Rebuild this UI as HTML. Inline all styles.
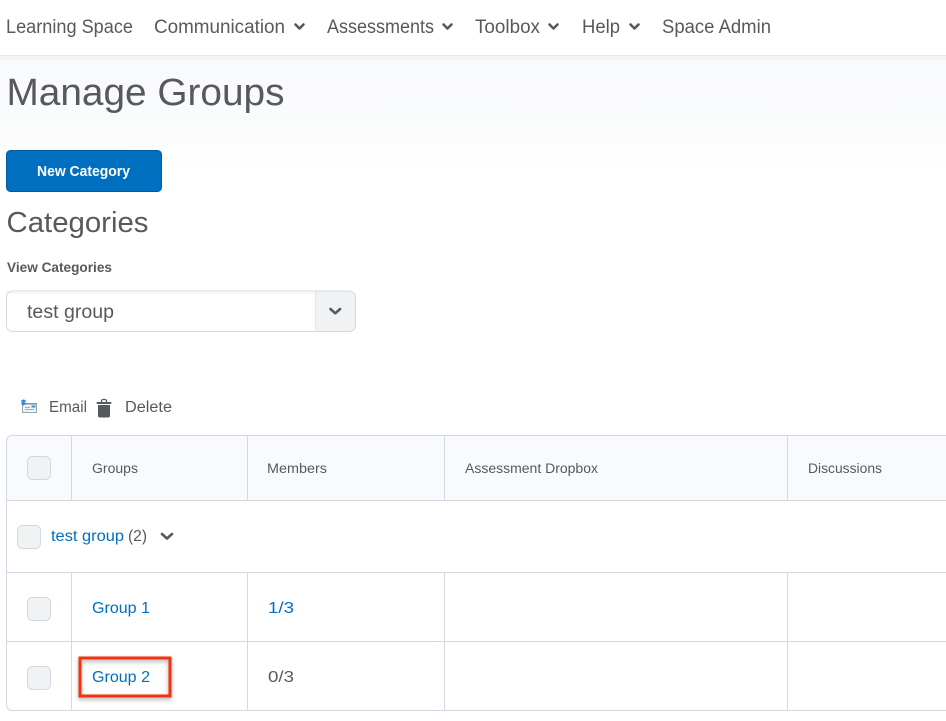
<!DOCTYPE html>
<html lang="en"><head><meta charset="utf-8"><title>Manage Groups</title>
<style>
html,body{margin:0;padding:0;background:#fff;width:946px;height:721px;overflow:hidden}
svg{display:block}
text{font-family:"Liberation Sans",sans-serif;fill:#565a5c}
</style></head><body>
<svg width="946" height="721" viewBox="0 0 946 721" xmlns="http://www.w3.org/2000/svg">
<defs>
<linearGradient id="g" x1="0" y1="0" x2="0" y2="1"><stop offset="0" stop-color="#f9fafb"/><stop offset=".5" stop-color="#fafbfc"/><stop offset="1" stop-color="#fff"/></linearGradient>
<filter id="s" x="-20%" y="-30%" width="140%" height="160%"><feDropShadow dx="0" dy="2" stdDeviation="2" flood-color="#000" flood-opacity=".35"/></filter>
<clipPath id="tc"><path d="M12 435H946V711H12a6 6 0 0 1-6-6V441a6 6 0 0 1 6-6Z"/></clipPath>
</defs>
<rect x="0" y="55" width="946" height="1" fill="#e6e8ec"/>
<rect x="0" y="56" width="946" height="4" fill="#f3f4f6"/>
<rect x="0" y="60" width="946" height="112" fill="url(#g)"/>

<g font-size="19">
<text x="6" y="33" textLength="127" lengthAdjust="spacingAndGlyphs">Learning Space</text>
<text x="154" y="33" textLength="131" lengthAdjust="spacingAndGlyphs">Communication</text>
<text x="327" y="33" textLength="107" lengthAdjust="spacingAndGlyphs">Assessments</text>
<text x="475" y="33" textLength="65" lengthAdjust="spacingAndGlyphs">Toolbox</text>
<text x="582" y="33" textLength="38" lengthAdjust="spacingAndGlyphs">Help</text>
<text x="662" y="33" textLength="109" lengthAdjust="spacingAndGlyphs">Space Admin</text>
</g>

<text x="6.500" y="105" font-size="38" textLength="278" lengthAdjust="spacingAndGlyphs">Manage Groups</text>

<rect x="6.500" y="150.500" width="155" height="41" rx="4" fill="#006fbf" stroke="#005d9f"/>
<text x="37" y="176" font-size="14.500" font-weight="bold" style="fill:#fff" textLength="93" lengthAdjust="spacingAndGlyphs">New Category</text>

<text x="6.500" y="232" font-size="29" textLength="142" lengthAdjust="spacingAndGlyphs">Categories</text>
<text x="7" y="272" font-size="14" font-weight="bold" textLength="105" lengthAdjust="spacingAndGlyphs">View Categories</text>

<rect x="6.500" y="291" width="349" height="40.500" rx="6" fill="#fff"/>
<path d="M315.500 291.500H350a5.500 5.500 0 0 1 5.500 5.500V326a5.500 5.500 0 0 1-5.500 5.500H315.500Z" fill="#f1f2f4"/>
<rect x="7" y="292" width="308" height="2" fill="#f5f6f8"/>
<rect x="6.500" y="291" width="349" height="40.500" rx="6" fill="none" stroke="#d3d9e3"/>
<rect x="315" y="291.500" width="1" height="40" fill="#e3e6ec"/>
<text x="27" y="318" font-size="19" textLength="87" lengthAdjust="spacingAndGlyphs">test group</text>

<g fill="none" stroke="#565a5c" stroke-width="2.600" stroke-linecap="round" stroke-linejoin="round">
<path d="M295.500 24.500l4 4 4-4"/>
<path d="M443.500 24.500l4 4 4-4"/>
<path d="M549.500 24.500l4 4 4-4"/>
<path d="M630.500 24.500l4 4 4-4"/>
<path d="M330.500 309l4.800 4.300 4.800-4.300"/>
<path d="M162 534l5 4.500 5-4.500"/>
</g>

<!-- email icon -->
<rect x="22.500" y="403.500" width="14" height="9" fill="#eef5fa" stroke="#9aa5ad"/>
<path d="M23 404h14" stroke="#7d8890" stroke-width="1"/>
<path d="M25 407.500h5M25 409.500h9" stroke="#8fb6d2" stroke-width="1"/>
<rect x="31.500" y="405.500" width="4" height="2" fill="#2a96dc"/>
<path d="M23.500 399.500v6M21 401h5M21 403.500h5M22.300 399.800v5M24.700 399.800v5" stroke="#1a8cf0" stroke-width="1"/>
<text x="49" y="412" font-size="15.500" textLength="38" lengthAdjust="spacingAndGlyphs">Email</text>
<!-- trash icon -->
<path d="M97.500 403h13" stroke="#565a5c" stroke-width="2" stroke-linecap="round"/>
<path d="M101.500 402.500v-1.500a1.500 1.500 0 0 1 1.500-1.500h2a1.500 1.500 0 0 1 1.500 1.500v1.500" fill="none" stroke="#565a5c" stroke-width="1.300"/>
<path d="M98 405h12v10.500a2 2 0 0 1-2 2h-8a2 2 0 0 1-2-2Z" fill="#565a5c"/>
<text x="125" y="412" font-size="15.500" textLength="47" lengthAdjust="spacingAndGlyphs">Delete</text>

<!-- table -->
<g clip-path="url(#tc)">
<rect x="6" y="435" width="940" height="65" fill="#f9fafb"/>
<rect x="6" y="500" width="940" height="1" fill="#d3d9e3"/>
<rect x="6" y="572" width="940" height="1" fill="#d3d9e3"/>
<rect x="6" y="641" width="940" height="1" fill="#d3d9e3"/>
<g fill="#d3d9e3">
<rect x="71" y="435" width="1" height="66"/><rect x="247" y="435" width="1" height="66"/><rect x="444" y="435" width="1" height="66"/><rect x="787" y="435" width="1" height="66"/>
<rect x="71" y="572" width="1" height="139"/><rect x="247" y="572" width="1" height="139"/><rect x="444" y="572" width="1" height="139"/><rect x="787" y="572" width="1" height="139"/>
</g>
</g>
<path d="M946 435.500H12a5.500 5.500 0 0 0-5.500 5.500V705a5.500 5.500 0 0 0 5.500 5.500H946" fill="none" stroke="#d3d9e3"/>

<g fill="#f1f2f4" stroke="#d3d9e3">
<rect x="27.500" y="456.500" width="23" height="23" rx="5"/>
<rect x="17.500" y="525.500" width="23" height="23" rx="5"/>
<rect x="27.500" y="597.500" width="23" height="23" rx="5"/>
<rect x="27.500" y="666.500" width="23" height="23" rx="5"/>
</g>

<g font-size="13.500">
<text x="92" y="473" textLength="46" lengthAdjust="spacingAndGlyphs">Groups</text>
<text x="267" y="473" textLength="60" lengthAdjust="spacingAndGlyphs">Members</text>
<text x="465" y="473" textLength="133" lengthAdjust="spacingAndGlyphs">Assessment Dropbox</text>
<text x="808" y="473" textLength="74" lengthAdjust="spacingAndGlyphs">Discussions</text>
</g>
<g font-size="15.500">
<text x="51" y="541" textLength="73" lengthAdjust="spacingAndGlyphs" style="fill:#006fbf">test group</text>
<text x="128" y="541" textLength="19" lengthAdjust="spacingAndGlyphs">(2)</text>
<text x="92" y="613" textLength="58" lengthAdjust="spacingAndGlyphs" style="fill:#006fbf">Group 1</text>
<text x="268" y="613" textLength="26" lengthAdjust="spacingAndGlyphs" style="fill:#006fbf">1/3</text>
<text x="92" y="682" textLength="58" lengthAdjust="spacingAndGlyphs" style="fill:#006fbf">Group 2</text>
<text x="268" y="682" textLength="26" lengthAdjust="spacingAndGlyphs">0/3</text>
</g>

<rect x="80" y="658" width="90" height="38" fill="none" stroke="#f5330f" stroke-width="3" filter="url(#s)"/>
</svg>
</body></html>
